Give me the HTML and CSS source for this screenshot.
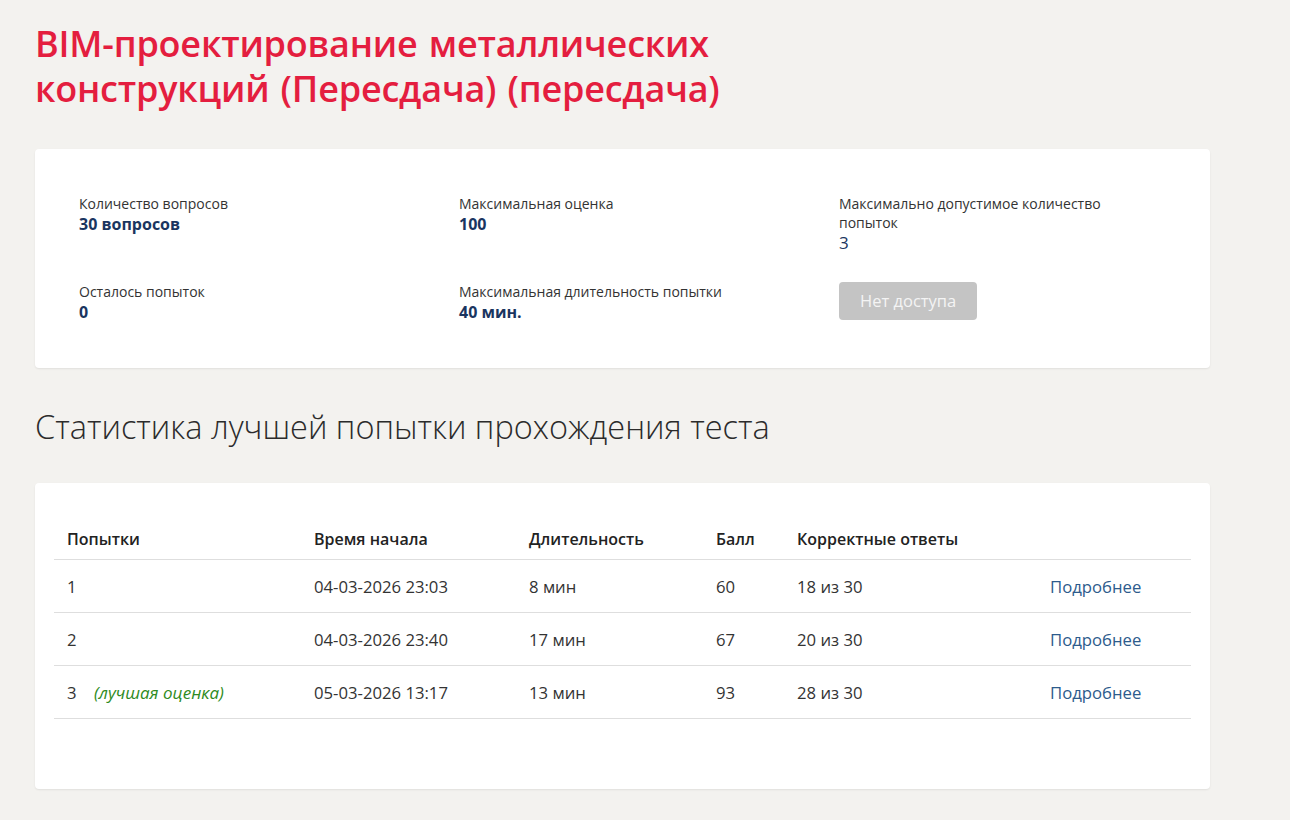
FILE: index.html
```html
<!DOCTYPE html>
<html lang="ru">
<head>
<meta charset="utf-8">
<link rel="stylesheet" href="styles.css">
</head>
<body>
<div class="page">
  <h1 class="title">BIM-проектирование металлических<br>конструкций (Пересдача) (пересдача)</h1>

  <div class="card info">
    <div class="item">
      <div class="label">Количество вопросов</div>
      <div class="value">30 вопросов</div>
    </div>
    <div class="item">
      <div class="label">Максимальная оценка</div>
      <div class="value">100</div>
    </div>
    <div class="item">
      <div class="label">Максимально допустимое количество<br>попыток</div>
      <div class="value light">3</div>
    </div>
    <div class="item">
      <div class="label">Осталось попыток</div>
      <div class="value">0</div>
    </div>
    <div class="item">
      <div class="label">Максимальная длительность попытки</div>
      <div class="value">40 мин.</div>
    </div>
    <div class="item">
      <span class="btn">Нет доступа</span>
    </div>
  </div>

  <h2 class="section">Статистика лучшей попытки прохождения теста</h2>

  <div class="card stats">
    <table class="tbl">
      <colgroup>
        <col class="c1"><col class="c2"><col class="c3"><col class="c4"><col class="c5"><col class="c6">
      </colgroup>
      <thead>
        <tr><th>Попытки</th><th>Время начала</th><th>Длительность</th><th>Балл</th><th>Корректные ответы</th><th></th></tr>
      </thead>
      <tbody>
        <tr><td>1</td><td>04-03-2026 23:03</td><td>8 мин</td><td>60</td><td>18 из 30</td><td><a class="more" href="#">Подробнее</a></td></tr>
        <tr><td>2</td><td>04-03-2026 23:40</td><td>17 мин</td><td>67</td><td>20 из 30</td><td><a class="more" href="#">Подробнее</a></td></tr>
        <tr><td>3 <span class="best">(лучшая оценка)</span></td><td>05-03-2026 13:17</td><td>13 мин</td><td>93</td><td>28 из 30</td><td><a class="more" href="#">Подробнее</a></td></tr>
      </tbody>
    </table>
  </div>
</div>
</body>
</html>
```
FILE: styles.css
```css
html, body {
  margin: 0;
  padding: 0;
  background: #f3f2ef;
}
body {
  font-family: "Open Sans", "Noto Sans", sans-serif;
  color: #333;
}
.page {
  padding: 21px 80px 30px 35px;
  width: 1175px;
}
.title {
  margin: 0 0 38px 0;
  font-family: "Open Sans", sans-serif;
  font-weight: 600;
  font-size: 36px;
  line-height: 45px;
  letter-spacing: -0.2px;
  word-spacing: 2px;
  color: #e41e3f;
}
.card {
  background: #fff;
  border-radius: 4px;
  box-shadow: 0 1px 2px rgba(0,0,0,0.08);
}
.info {
  display: grid;
  grid-template-columns: 380px 380px 330px;
  row-gap: 29px;
  padding: 45px 44px 46px 44px;
}
.label {
  font-size: 14px;
  line-height: 19px;
  color: #333;
}
.value {
  margin-top: 1px;
  font-size: 16px;
  line-height: 20px;
  font-weight: 700;
  color: #1a3560;
}
.value.light {
  font-weight: 400;
  font-size: 17px;
}
.btn {
  display: inline-block;
  height: 38px;
  line-height: 38px;
  padding: 0 21px;
  background: #c4c4c4;
  color: #f4f4f4;
  font-size: 16.5px;
  border-radius: 4px;
}
.section {
  margin: 37px 0 34px 0;
  font-weight: 300;
  font-size: 32.5px;
  line-height: 44px;
  color: #2b2b2b;
}
.stats {
  padding: 35px 19px 70px 19px;
}
.tbl {
  width: 1137px;
  border-collapse: collapse;
  table-layout: fixed;
  font-size: 16.7px;
}
.c1 { width: 247px; }
.c2 { width: 215px; }
.c3 { width: 187px; }
.c4 { width: 81px; }
.c5 { width: 253px; }
.c6 { width: 154px; }
.tbl th {
  text-align: left;
  font-size: 16px;
  font-weight: 600;
  color: #222;
  height: 41px;
  padding: 0 13px;
  vertical-align: middle;
  border-bottom: 1px solid #dedede;
}
.tbl td {
  height: 52px;
  padding: 0 13px;
  vertical-align: middle;
  border-bottom: 1px solid #dedede;
  color: #333;
}
.best {
  margin-left: 13px;
  font-style: italic;
  font-size: 17px;
  color: #2e8b22;
}
.more {
  color: #2d5b8c;
  text-decoration: none;
}
```
